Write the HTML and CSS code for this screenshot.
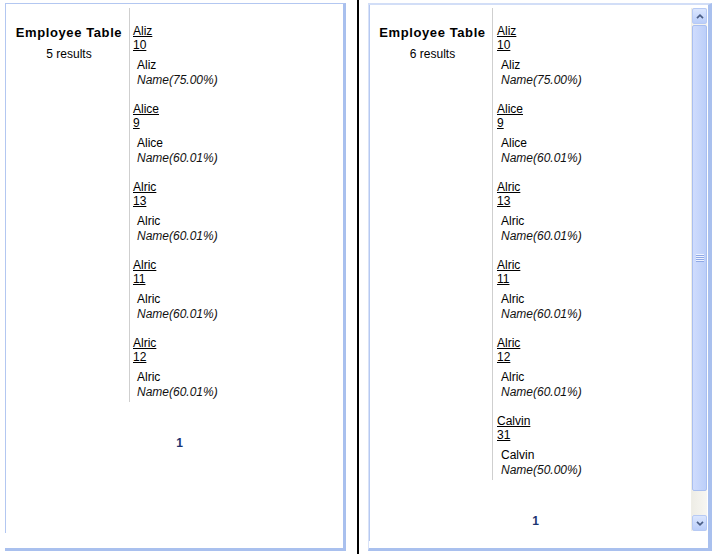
FILE: index.html
```html
<!DOCTYPE html>
<html>
<head>
<meta charset="utf-8">
<title>Employee Table</title>
<link rel="stylesheet" href="styles.css">
</head>
<body>
<div class="page">
  <section class="panel panel-plain">
    <div class="panel-inner">
      <div class="content">
        <div class="results">
          <div class="head">
            <div class="title">Employee Table</div>
            <div class="count">5 results</div>
          </div>
          <div class="list">
            <div class="item"><a class="lnk">Aliz</a><a class="lnk">10</a><div class="desc"><div>Aliz</div><div class="score">Name(75.00%)</div></div></div>
            <div class="item"><a class="lnk">Alice</a><a class="lnk">9</a><div class="desc"><div>Alice</div><div class="score">Name(60.01%)</div></div></div>
            <div class="item"><a class="lnk">Alric</a><a class="lnk">13</a><div class="desc"><div>Alric</div><div class="score">Name(60.01%)</div></div></div>
            <div class="item"><a class="lnk">Alric</a><a class="lnk">11</a><div class="desc"><div>Alric</div><div class="score">Name(60.01%)</div></div></div>
            <div class="item"><a class="lnk">Alric</a><a class="lnk">12</a><div class="desc"><div>Alric</div><div class="score">Name(60.01%)</div></div></div>
          </div>
        </div>
        <div class="pager"><span>1</span></div>
      </div>
    </div>
  </section>

  <div class="divider"></div>

  <section class="panel panel-scroll">
    <div class="panel-inner">
      <div class="content">
        <div class="results">
          <div class="head">
            <div class="title">Employee Table</div>
            <div class="count">6 results</div>
          </div>
          <div class="list">
            <div class="item"><a class="lnk">Aliz</a><a class="lnk">10</a><div class="desc"><div>Aliz</div><div class="score">Name(75.00%)</div></div></div>
            <div class="item"><a class="lnk">Alice</a><a class="lnk">9</a><div class="desc"><div>Alice</div><div class="score">Name(60.01%)</div></div></div>
            <div class="item"><a class="lnk">Alric</a><a class="lnk">13</a><div class="desc"><div>Alric</div><div class="score">Name(60.01%)</div></div></div>
            <div class="item"><a class="lnk">Alric</a><a class="lnk">11</a><div class="desc"><div>Alric</div><div class="score">Name(60.01%)</div></div></div>
            <div class="item"><a class="lnk">Alric</a><a class="lnk">12</a><div class="desc"><div>Alric</div><div class="score">Name(60.01%)</div></div></div>
            <div class="item"><a class="lnk">Calvin</a><a class="lnk">31</a><div class="desc"><div>Calvin</div><div class="score">Name(50.00%)</div></div></div>
          </div>
        </div>
        <div class="pager"><span>1</span></div>
      </div>
      <div class="scrollbar">
        <div class="sb-btn">
          <svg width="8" height="5" viewBox="0 0 8 5"><path d="M1 4.2 L4 1.2 L7 4.2" stroke="#4a5e86" stroke-width="1.7" fill="none"/></svg>
        </div>
        <div class="sb-thumb">
          <svg width="8" height="8" viewBox="0 0 8 8">
            <rect x="0" y="0" width="8" height="1" fill="#eef3ff"/><rect x="0" y="1" width="8" height="1" fill="#8fa9e6"/>
            <rect x="0" y="2" width="8" height="1" fill="#eef3ff"/><rect x="0" y="3" width="8" height="1" fill="#8fa9e6"/>
            <rect x="0" y="4" width="8" height="1" fill="#eef3ff"/><rect x="0" y="5" width="8" height="1" fill="#8fa9e6"/>
            <rect x="0" y="6" width="8" height="1" fill="#eef3ff"/><rect x="0" y="7" width="8" height="1" fill="#8fa9e6"/>
          </svg>
        </div>
        <div class="sb-track"></div>
        <div class="sb-btn">
          <svg width="8" height="5" viewBox="0 0 8 5"><path d="M1 0.8 L4 3.8 L7 0.8" stroke="#4a5e86" stroke-width="1.7" fill="none"/></svg>
        </div>
      </div>
    </div>
  </section>
</div>
</body>
</html>
```

FILE: styles.css
```css
* { box-sizing: border-box; }

html, body {
  margin: 0;
  padding: 0;
  background: #ffffff;
}

body {
  font-family: "Liberation Sans", Arial, sans-serif;
  font-size: 12px;
  color: #000;
}

.page {
  display: flex;
  align-items: flex-start;
  height: 554px;
  overflow: hidden;
}

.panel {
  display: flex;
  flex-direction: column;
  margin-top: 3px;
  height: 548px;
  background: #fff;
}

.panel-plain {
  margin-left: 5px;
  width: 341px;
  border-top: 1px solid #b3c7f1;
  border-right: 3px solid #a9c0ee;
  border-bottom: 3px solid #a9c0ee;
  padding-bottom: 15px;
}

.panel-plain .panel-inner {
  flex: 1;
  border-left: 1px solid #b3c7f1;
}

.panel-scroll {
  margin-left: 9px;
  width: 344px;
  border-top: 2px solid #d2def7;
  border-left: 1px solid #d8e2f8;
  border-right: 4px solid #a9c0ee;
  border-bottom: 3px solid #a9c0ee;
  padding-bottom: 7px;
}

.panel-scroll .panel-inner {
  flex: 1;
  display: flex;
  border-left: 1px solid #b6c9f1;
  min-height: 0;
}

.content {
  flex: 1;
  min-width: 0;
  overflow: hidden;
}

.divider {
  width: 2px;
  height: 554px;
  margin-left: 11px;
  background: #000;
  flex: none;
}

.results {
  display: flex;
  margin-top: 4px;
}

.panel-scroll .results {
  margin-top: 3px;
}

.head {
  flex: none;
  width: 124px;
  border-right: 1px solid #cfcfcf;
  padding: 17px 0 0 3px;
  text-align: center;
}

.panel-scroll .head {
  width: 123px;
}

.title {
  font-weight: bold;
  font-size: 13px;
  line-height: 16px;
  letter-spacing: 0.6px;
  white-space: nowrap;
}

.count {
  margin-top: 6px;
  line-height: 14px;
  font-size: 12px;
}

.list {
  display: flex;
  flex-direction: column;
  gap: 14px;
  padding: 16px 0 2px 3px;
}

.panel-scroll .list {
  padding-left: 4px;
}

.lnk {
  display: block;
  width: fit-content;
  line-height: 14px;
  color: #000;
  text-decoration: underline;
}

.desc {
  margin-top: 6px;
  padding-left: 4px;
  line-height: 15px;
}

.score {
  font-style: italic;
  color: #111;
}

.pager {
  margin-top: 34px;
  padding-left: 10px;
  text-align: center;
  line-height: 14px;
  font-weight: bold;
  font-size: 12px;
  color: #1a3470;
}

/* XP-style scrollbar */
.scrollbar {
  flex: none;
  width: 16px;
  height: 523px;
  margin: 3px 1px 0 0;
  display: flex;
  flex-direction: column;
  background: #f4f3ee;
  border-left: 1px solid #efeee7;
}

.sb-btn {
  flex: none;
  height: 16px;
  border: 1px solid #b7caf4;
  border-radius: 2px;
  background: linear-gradient(to bottom, #dbe6fe, #bacefa);
  display: flex;
  align-items: center;
  justify-content: center;
}

.sb-thumb {
  flex: none;
  margin-top: 1px;
  height: 466px;
  border: 1px solid #a9bff0;
  border-radius: 2px;
  background: linear-gradient(to right, #cfdcfd, #bccff9);
  display: flex;
  align-items: center;
  justify-content: center;
}

.sb-track {
  flex: 1;
  background: linear-gradient(to right, #eeede6, #f7f6f2);
}
```
